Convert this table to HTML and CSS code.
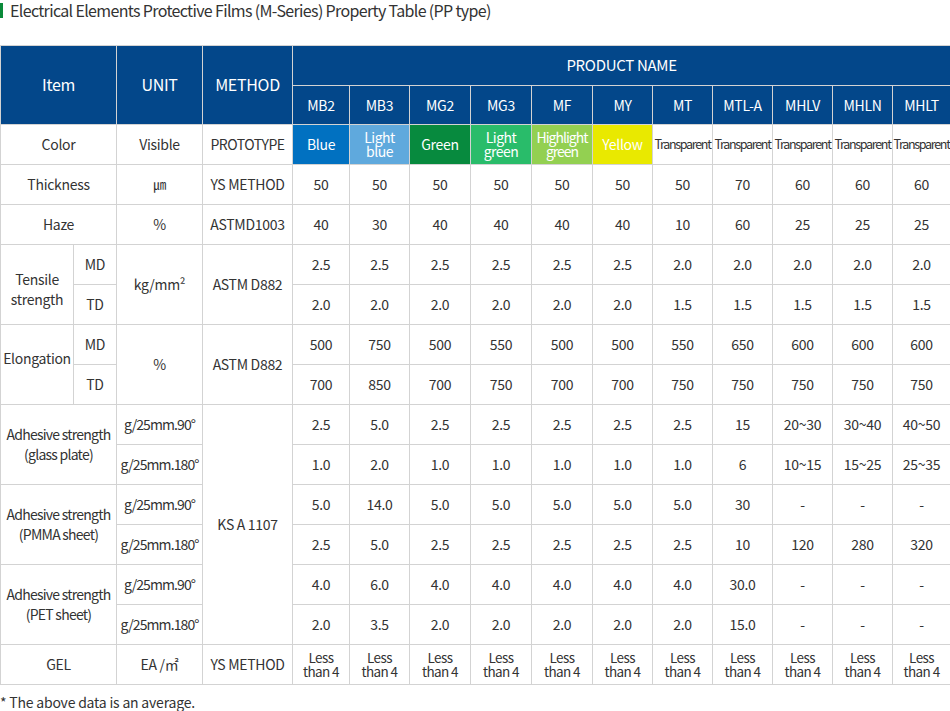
FILE: index.html
```html
<!DOCTYPE html>
<html lang="en">
<head>
<meta charset="utf-8">
<title>Property Table</title>
<link rel="stylesheet" href="styles.css">
</head>
<body>
<h2 class="title">Electrical Elements Protective Films (M-Series) Property Table (PP type)</h2>
<table class="spec">
  <colgroup>
    <col class="c-item1"><col class="c-item2"><col class="c-unit"><col class="c-method">
    <col class="c-p57"><col class="c-p60"><col class="c-p61"><col class="c-p61"><col class="c-p61"><col class="c-p60"><col class="c-p60"><col class="c-p60"><col class="c-p60"><col class="c-p60"><col class="c-p58">
  </colgroup>
  <thead>
    <tr class="h1">
      <th colspan="2" rowspan="2" class="big">Item</th>
      <th rowspan="2" class="big">UNIT</th>
      <th rowspan="2" class="big">METHOD</th>
      <th colspan="11" class="pn">PRODUCT NAME</th>
    </tr>
    <tr class="h2">
      <th>MB2</th><th>MB3</th><th>MG2</th><th>MG3</th><th>MF</th><th>MY</th><th>MT</th><th>MTL-A</th><th>MHLV</th><th>MHLN</th><th>MHLT</th>
    </tr>
  </thead>
  <tbody>
    <tr>
      <td colspan="2">Color</td><td>Visible</td><td class="proto">PROTOTYPE</td>
      <td class="sw blue">Blue</td>
      <td class="sw lblue two">Light<br>blue</td>
      <td class="sw green">Green</td>
      <td class="sw lgreen two">Light<br>green</td>
      <td class="sw hgreen two">Highlight<br>green</td>
      <td class="sw yellow">Yellow</td>
      <td class="tr">Transparent</td><td class="tr">Transparent</td><td class="tr">Transparent</td><td class="tr">Transparent</td><td class="tr">Transparent</td>
    </tr>
    <tr>
      <td colspan="2">Thickness</td><td class="um">㎛</td><td>YS METHOD</td>
      <td>50</td><td>50</td><td>50</td><td>50</td><td>50</td><td>50</td><td>50</td><td>70</td><td>60</td><td>60</td><td>60</td>
    </tr>
    <tr>
      <td colspan="2">Haze</td><td>%</td><td>ASTMD1003</td>
      <td>40</td><td>30</td><td>40</td><td>40</td><td>40</td><td>40</td><td>10</td><td>60</td><td>25</td><td>25</td><td>25</td>
    </tr>
    <tr>
      <td rowspan="2" class="lh tens">Tensile<br>strength</td><td>MD</td><td rowspan="2">kg/mm²</td><td rowspan="2">ASTM D882</td>
      <td>2.5</td><td>2.5</td><td>2.5</td><td>2.5</td><td>2.5</td><td>2.5</td><td>2.0</td><td>2.0</td><td>2.0</td><td>2.0</td><td>2.0</td>
    </tr>
    <tr>
      <td>TD</td>
      <td>2.0</td><td>2.0</td><td>2.0</td><td>2.0</td><td>2.0</td><td>2.0</td><td>1.5</td><td>1.5</td><td>1.5</td><td>1.5</td><td>1.5</td>
    </tr>
    <tr>
      <td rowspan="2" class="elong">Elongation</td><td>MD</td><td rowspan="2">%</td><td rowspan="2">ASTM D882</td>
      <td>500</td><td>750</td><td>500</td><td>550</td><td>500</td><td>500</td><td>550</td><td>650</td><td>600</td><td>600</td><td>600</td>
    </tr>
    <tr>
      <td>TD</td>
      <td>700</td><td>850</td><td>700</td><td>750</td><td>700</td><td>700</td><td>750</td><td>750</td><td>750</td><td>750</td><td>750</td>
    </tr>
    <tr>
      <td colspan="2" rowspan="2" class="adh">Adhesive strength<br>(glass plate)</td><td class="g">g/25mm.90°</td><td rowspan="6">KS A 1107</td>
      <td>2.5</td><td>5.0</td><td>2.5</td><td>2.5</td><td>2.5</td><td>2.5</td><td>2.5</td><td>15</td><td>20~30</td><td>30~40</td><td>40~50</td>
    </tr>
    <tr>
      <td class="g">g/25mm.180°</td>
      <td>1.0</td><td>2.0</td><td>1.0</td><td>1.0</td><td>1.0</td><td>1.0</td><td>1.0</td><td>6</td><td>10~15</td><td>15~25</td><td>25~35</td>
    </tr>
    <tr>
      <td colspan="2" rowspan="2" class="adh">Adhesive strength<br>(PMMA sheet)</td><td class="g">g/25mm.90°</td>
      <td>5.0</td><td>14.0</td><td>5.0</td><td>5.0</td><td>5.0</td><td>5.0</td><td>5.0</td><td>30</td><td>-</td><td>-</td><td>-</td>
    </tr>
    <tr>
      <td class="g">g/25mm.180°</td>
      <td>2.5</td><td>5.0</td><td>2.5</td><td>2.5</td><td>2.5</td><td>2.5</td><td>2.5</td><td>10</td><td>120</td><td>280</td><td>320</td>
    </tr>
    <tr>
      <td colspan="2" rowspan="2" class="adh">Adhesive strength<br>(PET sheet)</td><td class="g">g/25mm.90°</td>
      <td>4.0</td><td>6.0</td><td>4.0</td><td>4.0</td><td>4.0</td><td>4.0</td><td>4.0</td><td>30.0</td><td>-</td><td>-</td><td>-</td>
    </tr>
    <tr>
      <td class="g">g/25mm.180°</td>
      <td>2.0</td><td>3.5</td><td>2.0</td><td>2.0</td><td>2.0</td><td>2.0</td><td>2.0</td><td>15.0</td><td>-</td><td>-</td><td>-</td>
    </tr>
    <tr>
      <td colspan="2">GEL</td><td>EA /㎡</td><td>YS METHOD</td>
      <td class="lt">Less<br>than 4</td><td class="lt">Less<br>than 4</td><td class="lt">Less<br>than 4</td><td class="lt">Less<br>than 4</td><td class="lt">Less<br>than 4</td><td class="lt">Less<br>than 4</td><td class="lt">Less<br>than 4</td><td class="lt">Less<br>than 4</td><td class="lt">Less<br>than 4</td><td class="lt">Less<br>than 4</td><td class="lt">Less<br>than 4</td>
    </tr>
  </tbody>
</table>
<p class="note">* The above data is an average.</p>
</body>
</html>
```
FILE: styles.css
```css
html, body {
  margin: 0;
  padding: 0;
  background: #fff;
}
body {
  font-family: "Noto Sans CJK KR", "Noto Sans", sans-serif;
  color: #333;
  width: 950px;
}
.title {
  display: flex;
  align-items: center;
  gap: 7px;
  margin: 0 0 25px 0;
  font-size: 16px;
  font-weight: 400;
  line-height: 20px;
  color: #333;
  letter-spacing: -0.65px;
}
.title::before {
  content: "";
  display: block;
  width: 3px;
  height: 15px;
  background: #0a8a3a;
}
.spec {
  border-collapse: collapse;
  table-layout: fixed;
  width: 950px;
  font-size: 14px;
  letter-spacing: -0.3px;
}
.c-item1 { width: 73px; }
.c-item2 { width: 43px; }
.c-unit { width: 86px; }
.c-method { width: 90px; }
.c-p57 { width: 57px; }
.c-p58 { width: 58px; }
.c-p60 { width: 60px; }
.c-p61 { width: 61px; }
.spec th, .spec td {
  border: 1px solid #d3d3d3;
  padding: 0;
  text-align: center;
  vertical-align: middle;
  white-space: nowrap;
  overflow: hidden;
}
.spec th {
  background: #03478a;
  color: #fff;
  font-weight: 400;
}
.spec .h1 { height: 40px; }
.spec .h2 { height: 39px; }
.spec .big { font-size: 16px; padding-bottom: 2px; }
.spec .pn { font-size: 15px; padding-bottom: 2px; }
.spec .h2 th { font-size: 14px; }
.spec tbody tr { height: 40px; }
.spec td { color: #333; padding-bottom: 2px; }
.spec .proto { letter-spacing: -0.5px; font-size: 14px; }
.spec .sw { color: #fff; }
.spec .two { line-height: 14px; letter-spacing: -0.5px; }
.spec .blue { background: #0171c1; }
.spec .lblue { background: #5fa9dd; }
.spec .green { background: #078a3e; }
.spec .lgreen { background: #29bc6a; }
.spec .hgreen { background: #93d051; letter-spacing: -1px; }
.spec .yellow { background: #e9e900; }
.spec .tr { font-size: 12.5px; letter-spacing: -1.3px; }
.spec .um { font-size: 13px; }
.spec .lh { line-height: 20px; }
.spec .tens { padding-top: 8px; padding-bottom: 0; }
.spec .elong { padding-bottom: 14px; }
.spec .adh { line-height: 20px; letter-spacing: -0.75px; }
.spec .g { letter-spacing: -0.9px; }
.spec .lt { font-size: 13.5px; line-height: 14px; letter-spacing: -0.6px; padding-bottom: 1px; }
.note {
  margin: 8px 0 0 0;
  font-size: 14px;
  line-height: 18px;
  color: #333;
  letter-spacing: -0.2px;
}
```
